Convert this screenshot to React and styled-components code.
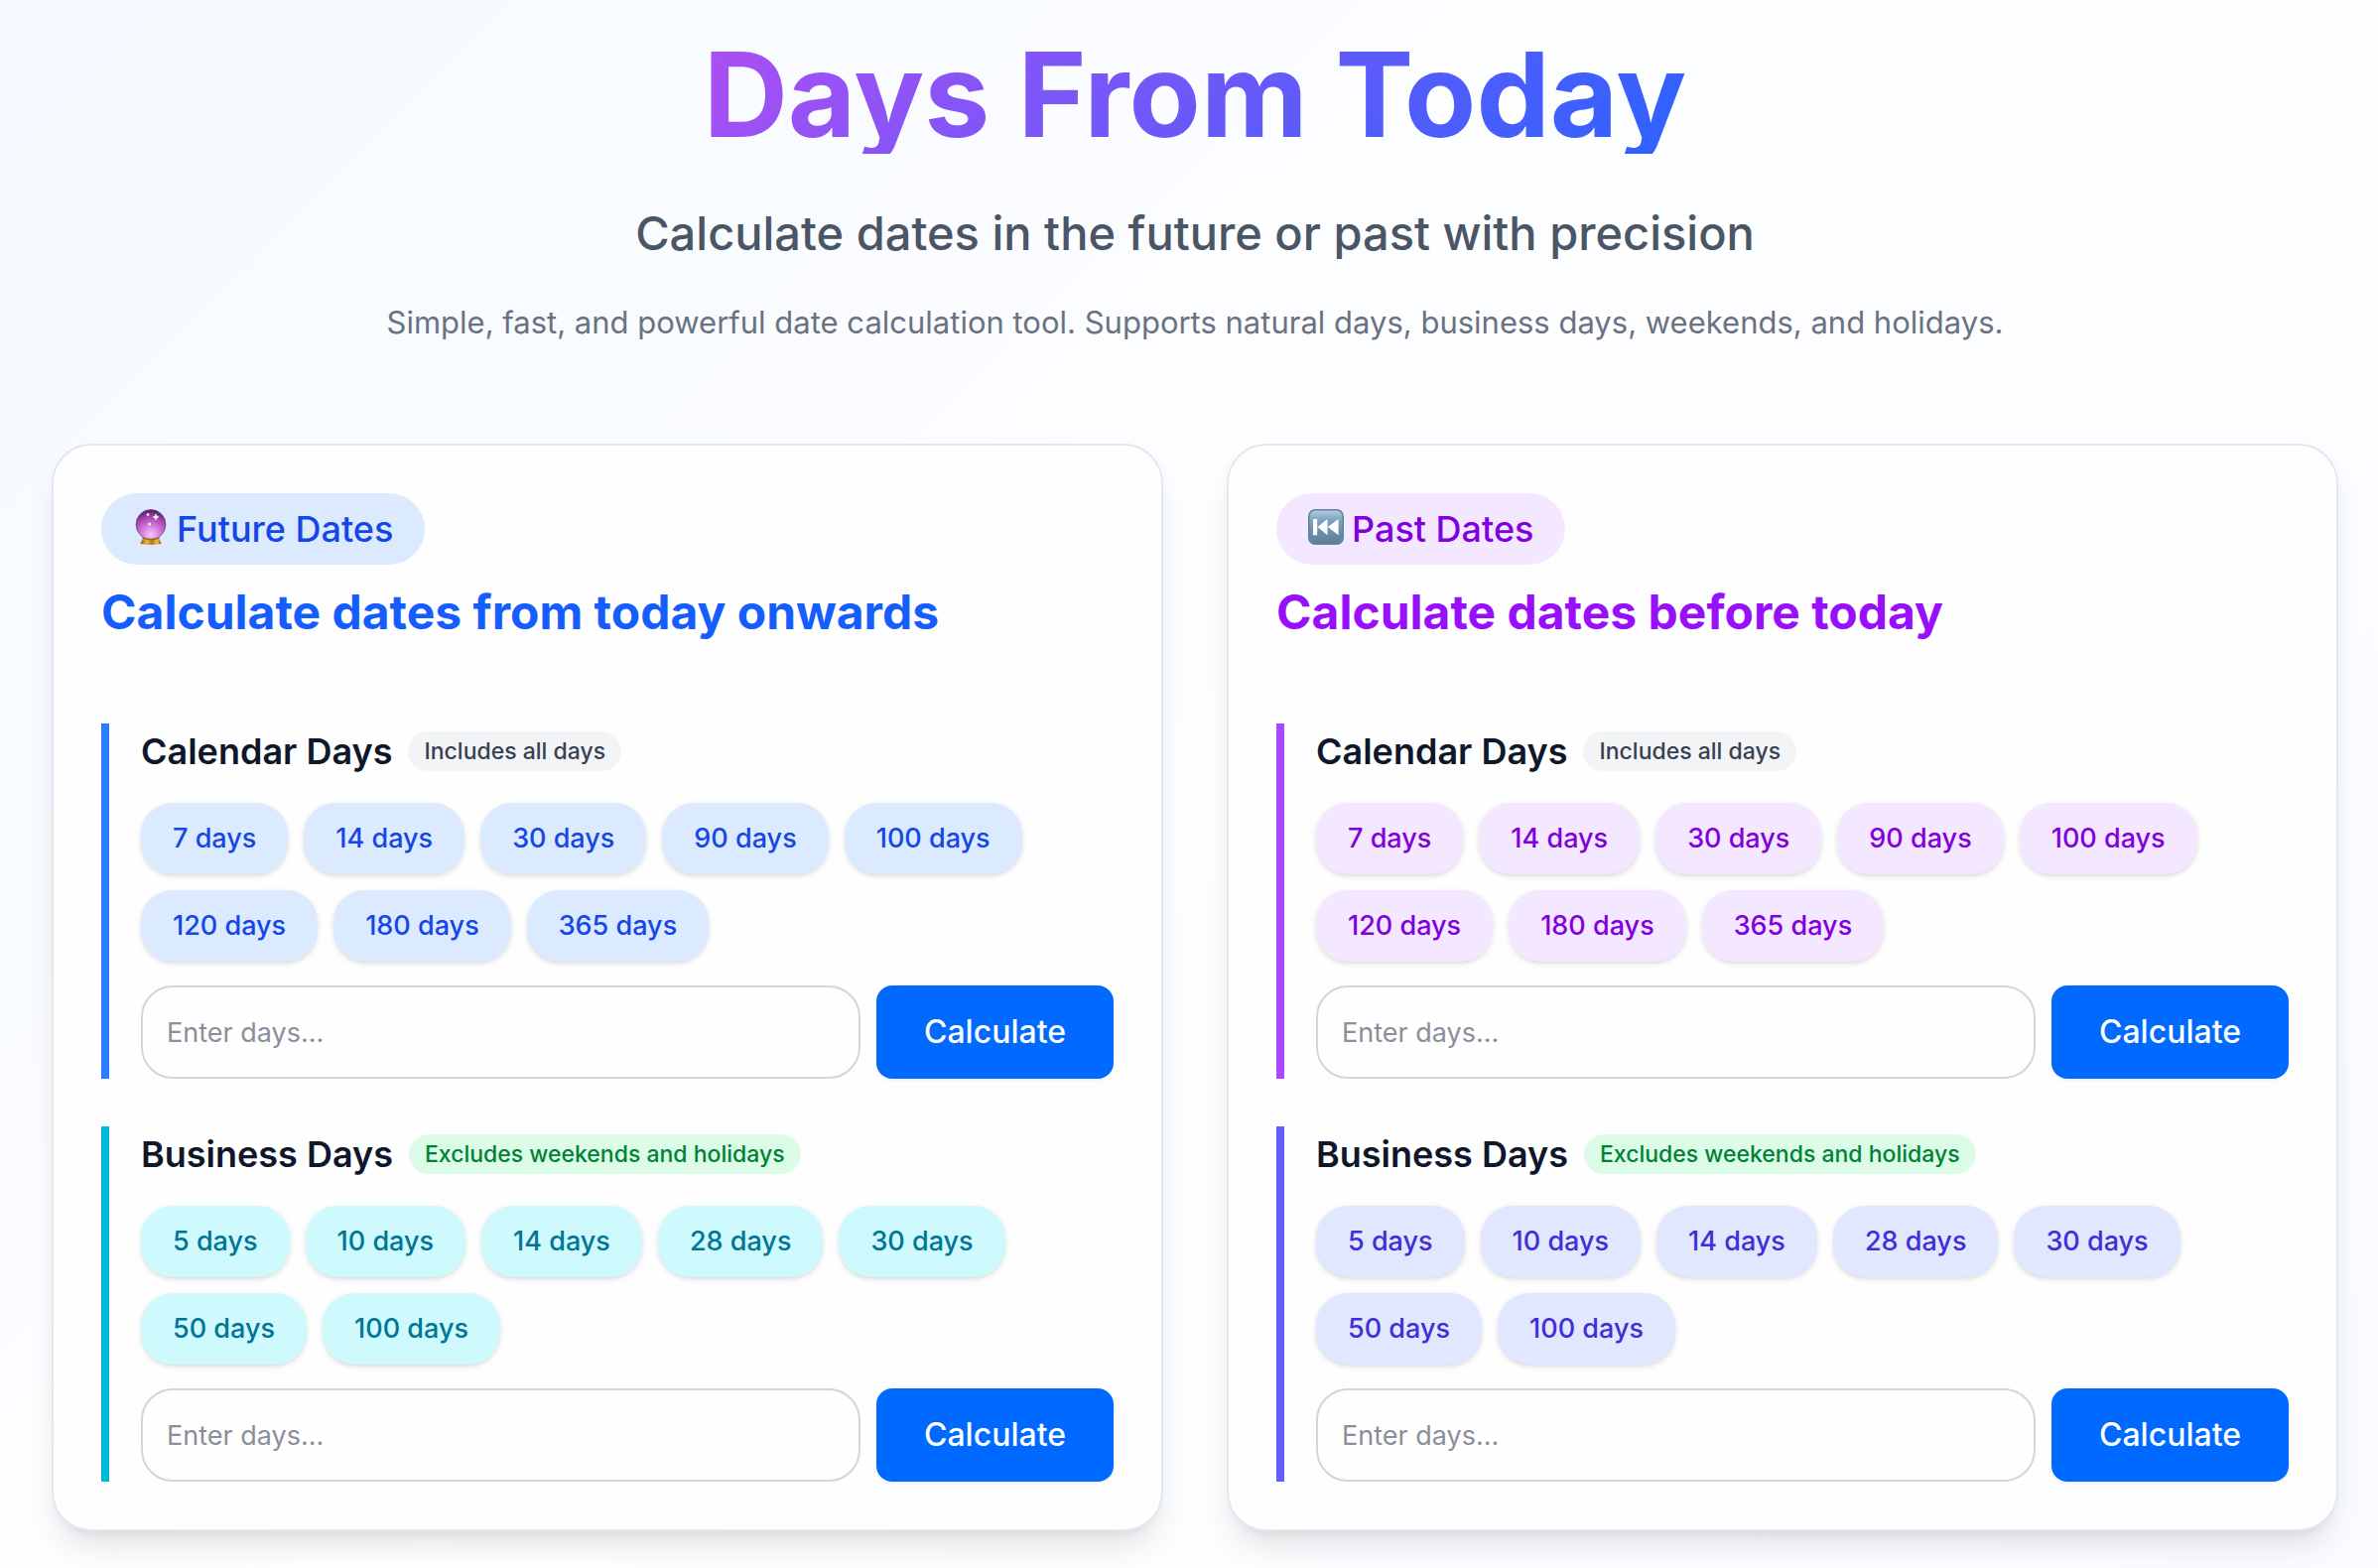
import { useId } from 'react'
import styled, { createGlobalStyle } from 'styled-components'

const GlobalStyle = createGlobalStyle`
  *, *::before, *::after {
    box-sizing: border-box;
  }

  body {
    margin: 0;
    font-family: Inter, "Liberation Sans", sans-serif;
    color: #0f172b;
    -webkit-font-smoothing: antialiased;
  }

  h1, h2, h3, p {
    margin: 0;
  }

  button, input {
    font-family: inherit;
  }
`

const Page = styled.main`
  min-height: 100vh;
  padding: 35px 40px 37px 52px;
  background: linear-gradient(135deg, #f5f9ff 0%, #fdfeff 50%, #fafbff 100%);
`

const Header = styled.header`
  display: flex;
  flex-direction: column;
  align-items: center;
  margin-bottom: 96px;
  text-align: center;
`

const Title = styled.h1`
  margin-bottom: 48px;
  font-size: 118px;
  line-height: 120px;
  font-weight: 700;
  color: transparent;
  background: linear-gradient(135deg, #ac4ff3, #2c62ff);
  background-clip: text;
  -webkit-background-clip: text;
`

const Subtitle = styled.p`
  margin-bottom: 32px;
  font-size: 47px;
  line-height: 64px;
  font-weight: 500;
  color: #4a5565;
`

const Description = styled.p`
  font-size: 31px;
  line-height: 52px;
  color: #6a7282;
`

const Columns = styled.div`
  display: grid;
  grid-template-columns: repeat(2, minmax(0, 1fr));
  gap: 64px;
`

const Card = styled.section`
  padding: 48px;
  border: 2px solid #e2e8f0;
  border-radius: 40px;
  background: #fefeff;
  box-shadow: 0 20px 30px -6px rgba(0, 0, 0, 0.1), 0 8px 12px -8px rgba(0, 0, 0, 0.1);
`

const Badge = styled.div`
  display: inline-flex;
  align-items: center;
  gap: 8px;
  padding: 8px 32px;
  margin-bottom: 16px;
  border-radius: 36px;
  font-size: 36px;
  line-height: 56px;
  font-weight: 500;
  color: ${props => props.$color};
  background: ${props => props.$bg};

  > svg {
    width: 36px;
    height: 36px;
    margin-bottom: 4px;
  }
`

const CardTitle = styled.h2`
  margin-bottom: 80px;
  font-size: 48px;
  line-height: 64px;
  font-weight: 700;
  color: ${props => props.$color};
`

const Sections = styled.div`
  display: flex;
  flex-direction: column;
  gap: 48px;
`

const Section = styled.form`
  display: flex;
  flex-direction: column;
  gap: 24px;
  padding-left: 32px;
  border-left: 8px solid ${props => props.$accent};
`

const SectionHead = styled.div`
  display: flex;
  align-items: center;
  gap: 16px;
`

const SectionTitle = styled.h3`
  font-size: 36px;
  line-height: 56px;
  font-weight: 600;
`

const Tag = styled.span`
  padding: 4px 16px;
  border-radius: 20px;
  font-size: 23px;
  line-height: 32px;
  font-weight: 500;
  color: ${props => props.$color};
  background: ${props => props.$bg};
`

const Chips = styled.div`
  display: flex;
  flex-wrap: wrap;
  gap: 16px;
`

const Chip = styled.button`
  padding: 16px 32px;
  border: 0;
  border-radius: 32px;
  font-size: 27px;
  line-height: 40px;
  font-weight: 500;
  color: ${props => props.$color};
  background: ${props => props.$bg};
  box-shadow: 0 2px 6px rgba(0, 0, 0, 0.1), 0 2px 4px -2px rgba(0, 0, 0, 0.1);
  cursor: pointer;
`

const InputRow = styled.div`
  display: flex;
  gap: 16px;
`

const DaysInput = styled.input`
  flex: 1;
  min-width: 0;
  padding: 0 24px;
  border: 2px solid #d1d5dc;
  border-radius: 32px;
  font-size: 27px;
  color: #0f172b;
  background: transparent;

  &::placeholder {
    color: #8b8f99;
    opacity: 1;
  }
`

const CalculateButton = styled.button`
  padding: 23px 48px;
  border: 0;
  border-radius: 16px;
  font-size: 32px;
  line-height: 48px;
  font-weight: 500;
  color: #fff;
  background: #0069ff;
  box-shadow: 0 2px 4px rgba(0, 0, 0, 0.05);
  cursor: pointer;
`

const CrystalBall = () => (
  <svg viewBox="0 0 36 36" aria-hidden="true">
    <defs>
      <radialGradient id="ball" cx="0.5" cy="0.85" r="0.85">
        <stop offset="0" stopColor="#f8c8fb" />
        <stop offset="0.35" stopColor="#d57fe0" />
        <stop offset="0.7" stopColor="#a845b0" />
        <stop offset="1" stopColor="#4e1d59" />
      </radialGradient>
      <linearGradient id="stand" x1="0" x2="1" y1="0" y2="0">
        <stop offset="0" stopColor="#8a5a14" />
        <stop offset="0.3" stopColor="#f0b83a" />
        <stop offset="0.55" stopColor="#a87820" />
        <stop offset="0.8" stopColor="#f3c243" />
        <stop offset="1" stopColor="#80500f" />
      </linearGradient>
    </defs>
    <path d="M10 29h16l1.500 3.500q1.500 2 .5 2.500q-10 1.800-20 0q-1-.5.500-2.500z" fill="url(#stand)" />
    <circle cx="18" cy="15.500" r="15" fill="url(#ball)" stroke="#66356f" strokeWidth="0.600" />
    <path d="M9 28q9 4 18 0l-1 2q-8 2-16 0z" fill="#9b641b" />
    <circle cx="15" cy="5.500" r="1.500" fill="#fff" opacity="0.85" />
    <path d="M23 5l.9 2.100 2.100.9-2.100.9-.9 2.100-.9-2.100-2.100-.9 2.100-.9z" fill="#fff" stroke="#fff" strokeWidth="0.500" />
    <circle cx="16.800" cy="15" r="1.500" fill="#fff" opacity="0.85" />
  </svg>
)

const PreviousTrack = () => (
  <svg viewBox="0 0 36 36" aria-hidden="true">
    <defs>
      <linearGradient id="key" x1="0" x2="0" y1="0" y2="1">
        <stop offset="0" stopColor="#b4cfe2" />
        <stop offset="0.3" stopColor="#7fa2bf" />
        <stop offset="1" stopColor="#5d7b95" />
      </linearGradient>
    </defs>
    <rect x="0.750" y="0.750" width="34.500" height="34.500" rx="6.500" fill="url(#key)" stroke="#62819c" strokeWidth="1.500" />
    <path d="M5 10h4.200v16.200H5zM19.500 10v16.200L9.600 18.100zM30.600 10v16.200L19.800 18.100z" fill="#fff" />
  </svg>
)

const DaysSection = ({ title, tag, tagColor, tagBg, days, accent, color, bg }) => {
  const inputId = useId()

  return (
    <Section $accent={accent} onSubmit={e => e.preventDefault()}>
      <SectionHead>
        <SectionTitle>{title}</SectionTitle>
        <Tag $color={tagColor} $bg={tagBg}>{tag}</Tag>
      </SectionHead>
      <Chips>
        {days.map(n => (
          <Chip key={n} type="button" $color={color} $bg={bg}>{n} days</Chip>
        ))}
      </Chips>
      <InputRow>
        <DaysInput id={inputId} aria-label={title} inputMode="numeric" placeholder="Enter days..." />
        <CalculateButton type="submit">Calculate</CalculateButton>
      </InputRow>
    </Section>
  )
}

const calendar = {
  title: 'Calendar Days',
  tag: 'Includes all days',
  tagColor: '#364153',
  tagBg: '#f3f4f6',
  days: [7, 14, 30, 90, 100, 120, 180, 365],
}

const business = {
  title: 'Business Days',
  tag: 'Excludes weekends and holidays',
  tagColor: '#008236',
  tagBg: '#dcfce7',
  days: [5, 10, 14, 28, 30, 50, 100],
}

const App = () => (
  <>
    <GlobalStyle />
    <Page>
      <Header>
        <Title>Days From Today</Title>
        <Subtitle>Calculate dates in the future or past with precision</Subtitle>
        <Description>
          Simple, fast, and powerful date calculation tool. Supports natural days, business days, weekends, and holidays.
        </Description>
      </Header>
      <Columns>
        <Card>
          <Badge $color="#1447e6" $bg="#dbeafe"><CrystalBall />Future Dates</Badge>
          <CardTitle $color="#155dfc">Calculate dates from today onwards</CardTitle>
          <Sections>
            <DaysSection {...calendar} accent="#2b7fff" color="#1447e6" bg="#dbeafe" />
            <DaysSection {...business} accent="#00b8db" color="#007595" bg="#cefafe" />
          </Sections>
        </Card>
        <Card>
          <Badge $color="#8200db" $bg="#f3e8ff"><PreviousTrack />Past Dates</Badge>
          <CardTitle $color="#9810fa">Calculate dates before today</CardTitle>
          <Sections>
            <DaysSection {...calendar} accent="#ad46ff" color="#8200db" bg="#f3e8ff" />
            <DaysSection {...business} accent="#615fff" color="#432dd7" bg="#e0e7ff" />
          </Sections>
        </Card>
      </Columns>
    </Page>
  </>
)

export default App
